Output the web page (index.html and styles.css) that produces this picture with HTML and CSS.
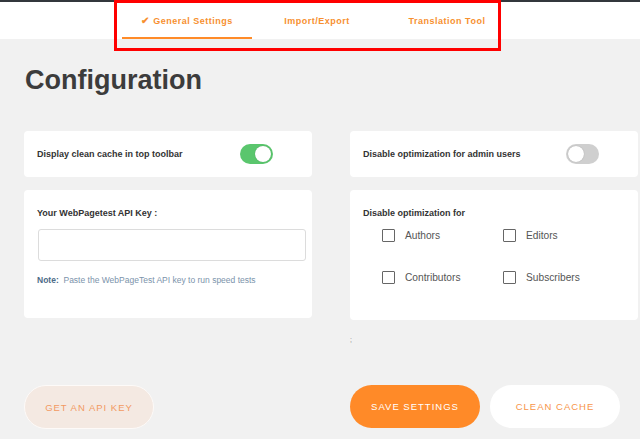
FILE: index.html
```
<!DOCTYPE html>
<html>
<head>
<meta charset="utf-8">
<link rel="stylesheet" href="styles.css">
</head>
<body>
<header class="topbar">
  <nav class="tabs">
    <a class="tab active"><span class="check">&#10004;</span> General Settings</a>
    <a class="tab">Import/Export</a>
    <a class="tab">Translation Tool</a>
  </nav>
  <div class="highlight"></div>
</header>
<main class="main">
  <h1 class="title">Configuration</h1>
  <div class="grid">
    <div class="col">
      <div class="card row-card">
        <span class="row-label">Display clean cache in top toolbar</span>
        <span class="toggle on"><span class="knob"></span></span>
      </div>
      <div class="card key-card">
        <div class="label">Your WebPagetest API Key :</div>
        <div class="input"></div>
        <div class="note"><b>Note:</b>&nbsp; Paste the WebPageTest API key to run speed tests</div>
      </div>
    </div>
    <div class="col">
      <div class="card row-card">
        <span class="row-label">Disable optimization for admin users</span>
        <span class="toggle"><span class="knob"></span></span>
      </div>
      <div class="card roles-card">
        <div class="label">Disable optimization for</div>
        <div class="roles">
          <label class="role"><span class="box"></span>Authors</label>
          <label class="role"><span class="box"></span>Editors</label>
          <label class="role"><span class="box"></span>Contributors</label>
          <label class="role"><span class="box"></span>Subscribers</label>
        </div>
      </div>
      <div class="stray">;</div>
    </div>
  </div>
  <div class="actions">
    <div class="col">
      <button class="btn btn-soft">GET AN API KEY</button>
    </div>
    <div class="col btn-row">
      <button class="btn btn-primary">SAVE SETTINGS</button>
      <button class="btn btn-white">CLEAN CACHE</button>
    </div>
  </div>
</main>
</body>
</html>
```
FILE: styles.css
```
* { box-sizing: border-box; }
body {
  margin: 0;
  background: #f1f1f1;
  font-family: "Liberation Sans", Arial, sans-serif;
  color: #333;
  width: 640px;
  height: 439px;
  overflow: hidden;
}
.topbar {
  position: relative;
  background: #fff;
  border-top: 2px solid #32373c;
  height: 39px;
}
.tabs {
  display: flex;
  padding-left: 122px;
}
.tab {
  width: 130px;
  height: 37px;
  padding-top: 2px;
  display: flex;
  align-items: center;
  justify-content: center;
  font-size: 9px;
  font-weight: bold;
  letter-spacing: 0.5px;
  color: #f7902f;
  border-bottom: 2px solid transparent;
}
.tab.active { border-bottom-color: #ff8b28; }
.check { font-size: 10px; margin-right: 4px; letter-spacing: 0; }
.highlight {
  position: absolute;
  left: 114px;
  top: -2px;
  width: 387px;
  height: 51px;
  border: 3px solid #ff0000;
}
.main { padding-left: 24px; }
.title {
  margin: 25px 0 0 1px;
  font-size: 27px;
  line-height: 32px;
  font-weight: bold;
  color: #3c3c3c;
}
.grid, .actions {
  display: grid;
  grid-template-columns: 288px 288px;
  column-gap: 38px;
}
.grid { margin-top: 35px; align-items: start; }
.col { display: flex; flex-direction: column; gap: 13px; }
.card {
  background: #fff;
  border-radius: 4px;
}
.row-card {
  height: 46px;
  display: flex;
  align-items: center;
  padding-left: 13px;
}
.row-label {
  flex: 0 0 203px;
  font-size: 9px;
  font-weight: bold;
  color: #333;
}
.toggle {
  position: relative;
  width: 33px;
  height: 20px;
  border-radius: 10px;
  background: #cfcfcf;
}
.toggle .knob {
  position: absolute;
  top: 2px;
  left: 2px;
  width: 16px;
  height: 16px;
  border-radius: 50%;
  background: #fff;
  box-shadow: 0 0 1px rgba(0,0,0,0.3);
}
.toggle.on { background: #5ac66d; }
.toggle.on .knob { left: 15px; }
.key-card {
  height: 128px;
  padding: 17px 6px 0 13px;
}
.label {
  font-size: 9px;
  font-weight: bold;
  line-height: 12px;
  color: #333;
}
.input {
  margin: 10px 0 0 1px;
  height: 32px;
  border: 1px solid #dcdcdc;
  border-radius: 3px;
}
.note {
  margin-top: 13px;
  font-size: 8.5px;
  line-height: 12px;
  color: #7b93ab;
}
.note b { color: #4d6b88; }
.roles-card {
  height: 130px;
  padding: 17px 13px 0 13px;
}
.roles {
  display: grid;
  grid-template-columns: 121px 100px;
  row-gap: 29px;
  margin-top: 10px;
  padding-left: 19px;
}
.role {
  display: flex;
  align-items: center;
  height: 13px;
  font-size: 10.2px;
  color: #555;
}
.box {
  width: 13px;
  height: 13px;
  border: 1.5px solid #666;
  border-radius: 1px;
  margin-right: 10px;
}
.stray {
  margin-top: 2px;
  font-size: 7px;
  line-height: 10px;
  color: #888;
}
.actions { margin-top: 40px; }
.btn-row { flex-direction: row; gap: 10px; }
.btn {
  height: 44px;
  width: 130px;
  border-radius: 22px;
  border: 1px solid transparent;
  font-family: "Liberation Sans", Arial, sans-serif;
  font-size: 9.5px;
  letter-spacing: 1px;
  padding: 0;
}
.btn-soft { background: #f4e9e2; border-color: #fdfaf8; color: #f29a63; }
.btn-primary { background: #ff8a28; color: #fff; height: 43px; }
.btn-white { background: #fff; color: #f7954a; height: 43px; }
```
